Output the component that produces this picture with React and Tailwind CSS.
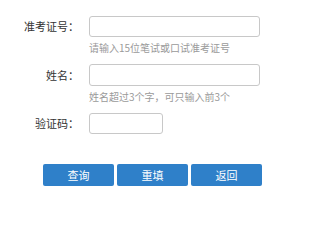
export default function App() {
  const font = { fontFamily: '"Microsoft YaHei", "Noto Sans CJK SC", sans-serif' }
  return (
    <div className="w-[327px] h-[200px] bg-white pt-[16px]" style={font}>
      <div className="flex items-center">
        <label className="w-[80px] text-right text-[11px] text-[#333] pr-[1px]">准考证号：</label>
        <input className="ml-[9px] w-[171px] h-[21px] border border-[#c8c8c8] rounded-[3px] outline-none" />
      </div>
      <p className="ml-[89px] mt-[4px] leading-[14px] text-[10px] text-[#9a9a9a]">请输入15位笔试或口试准考证号</p>

      <div className="flex items-center mt-[9px]">
        <label className="w-[80px] text-right text-[11px] text-[#333] pr-[1px]">姓名：</label>
        <input className="ml-[9px] w-[171px] h-[22px] border border-[#c8c8c8] rounded-[3px] outline-none" />
      </div>
      <p className="ml-[89px] mt-[4px] leading-[14px] text-[10px] text-[#9a9a9a]">姓名超过3个字，可只输入前3个</p>

      <div className="flex items-center mt-[9px]">
        <label className="w-[80px] text-right text-[11px] text-[#333] pr-[1px]">验证码：</label>
        <input className="ml-[9px] w-[74px] h-[21px] border border-[#c8c8c8] rounded-[3px] outline-none" />
      </div>

      <div className="flex gap-[3px] ml-[43px] mt-[30px]">
        {['查询', '重填', '返回'].map(t => (
          <button key={t} className="w-[71px] h-[22px] bg-[#2f80c9] rounded-[2px] text-white text-[11px]">{t}</button>
        ))}
      </div>
    </div>
  )
}
